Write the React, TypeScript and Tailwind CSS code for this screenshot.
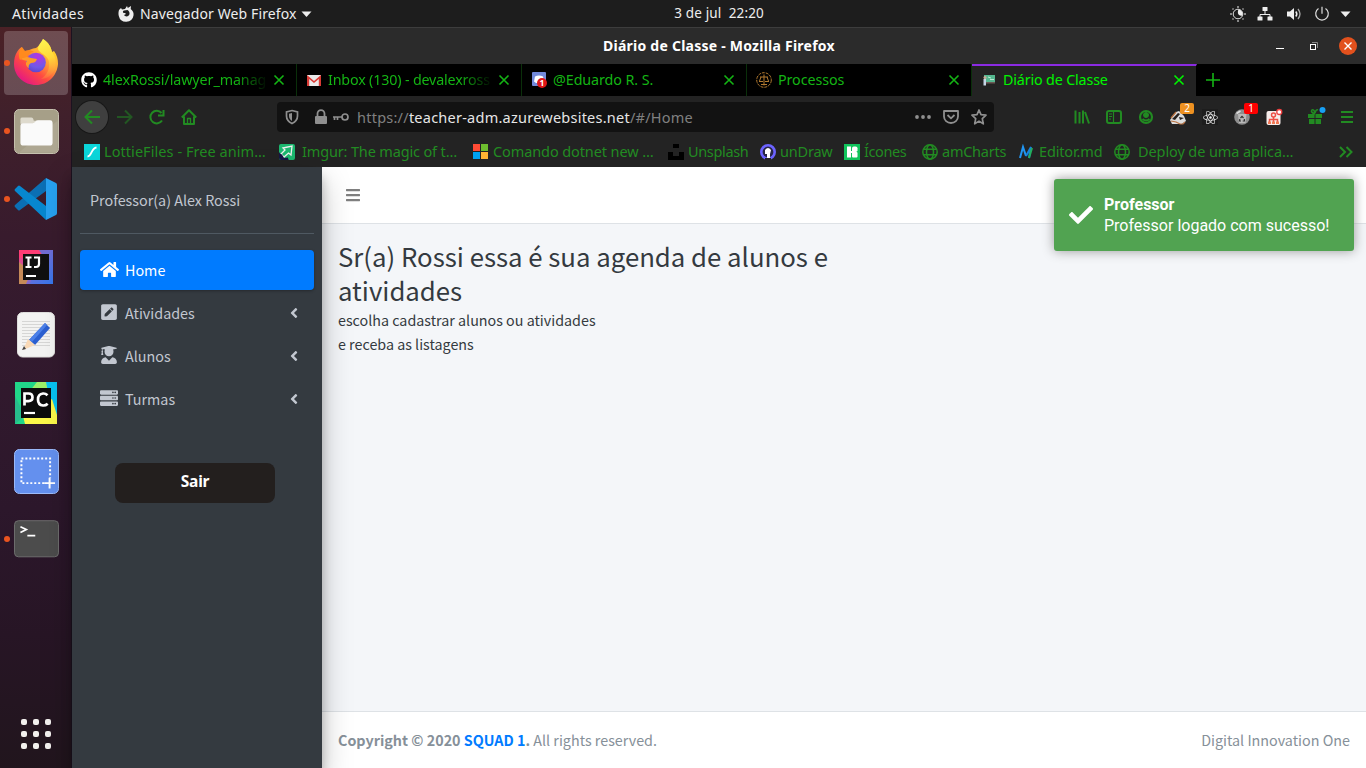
import type { ReactNode } from "react";
import { FaGithub, FaHome, FaPenSquare, FaUserGraduate, FaServer, FaAngleLeft, FaBars, FaCheck, FaReact } from "react-icons/fa";

const ubuntu = "font-['Noto_Sans','Open_Sans',sans-serif]";
const source = "font-['Noto_Sans_CJK_SC',sans-serif]";

function Firefox() {
  return (
    <svg className="-mt-0.5" width="46" height="46" viewBox="0 0 46 46">
      <defs>
        <linearGradient id="ffBody" x1="0.85" y1="0.1" x2="0.2" y2="0.95">
          <stop offset="0" stopColor="#ffe226" />
          <stop offset="0.35" stopColor="#ffa436" />
          <stop offset="0.65" stopColor="#ff4a41" />
          <stop offset="1" stopColor="#e31587" />
        </linearGradient>
        <linearGradient id="ffTail" x1="0.4" y1="0" x2="0.6" y2="1">
          <stop offset="0" stopColor="#fff44f" />
          <stop offset="0.5" stopColor="#ffd83a" />
          <stop offset="1" stopColor="#ff9640" stopOpacity="0.2" />
        </linearGradient>
        <radialGradient id="ffGlobe" cx="0.6" cy="0.2" r="0.9">
          <stop offset="0" stopColor="#b833e1" />
          <stop offset="0.6" stopColor="#7059e8" />
          <stop offset="1" stopColor="#5b3fc4" />
        </radialGradient>
      </defs>
      <path d="M4 13c2-3 3-4 5-5 0 3 1 4 3 4 4 0 7-3 11-3 3-2 6-5 7-9 6 4 8 8 9 13l2-1c3 4 4 8 4 13-1 12-10 21-22 21S1 37 1 25c0-5 1-9 3-12z" fill="url(#ffBody)" />
      <path d="M30 0c6 4 8 8 9 13 4 5 5 12 2 19-3 5-8 8-13 8 6-4 9-10 8-17-1-6-7-8-10-11-3-4 2-8 4-12z" fill="url(#ffTail)" />
      <circle cx="23" cy="23.500" r="9.800" fill="url(#ffGlobe)" />
      <path d="M7 20c3-2 7-3 11-1l6 1c-1 3-3 4-6 4-2 1-3 3-2 5-3-1-4-5-2-7-2-1-5-1-7-2z" fill="#ff9a28" />
      <path d="M9 8l3 4c3-1 6-1 9 1-3 0-6 2-7 5-3 0-5 1-7 3-2-5-1-10 2-13z" fill="#ff8a1d" />
    </svg>
  );
}

function Files() {
  return (
    <svg width="45" height="45" viewBox="0 0 45.500 45.500">
      <rect x="0.5" y="0.5" width="44.500" height="44.500" rx="5" fill="#a69f88" stroke="#c7c2b0" />
      <path d="M44 12v28q0 4-4 4H5z" fill="#b5af9c" opacity="0.5" />
      <path d="M6.500 15v-5q0-1.500 2-1.500h9q2 0 2.500 3.500h16q2.500 0 2.500 3" fill="#dedacd" />
      <path d="M6.500 17q0-2.500 2.500-2.500h10q1.500 0 2.500-1.500 1-1.500 3-1.500h12q2.500 0 2.500 2.500v20q0 3-3 3H9.500q-3 0-3-3z" fill="#fafafa" />
    </svg>
  );
}

function VsCode() {
  return (
    <svg width="44" height="44" viewBox="0 0 44 44">
      <path d="M1 28q-1 1 0 2l3 3q1 1 2 0L32 14V1z" fill="#0b6fb4" />
      <path d="M1 14q-1-1 0-2l3-3q1-1 2 0l26 20v14z" fill="#0787cf" />
      <path d="M32 1l10 5q1 .5 1 2v28q0 1.500-1 2l-10 5z" fill="#27a1f0" />
    </svg>
  );
}

function IntelliJ() {
  return (
    <svg width="36" height="36" viewBox="0 0 36 36">
      <defs>
        <linearGradient id="ijBg" x1="0" y1="0" x2="1" y2="1">
          <stop offset="0" stopColor="#fc3a70" />
          <stop offset="0.5" stopColor="#a863c0" />
          <stop offset="1" stopColor="#087cfa" />
        </linearGradient>
      </defs>
      <path d="M1 1h34v34H1z" fill="url(#ijBg)" />
      <path d="M1 13l12 10-5 12H1z" fill="#c58a58" />
      <path d="M21 1h14v34H12z" fill="#4b74e5" opacity="0.65" />
      <path d="M1 1h20l5 8H1z" fill="#fe3d75" />
      <rect x="5" y="5" width="26" height="26" fill="#101010" />
      <path d="M7.500 8.500h6M10.500 8v10.500M7.500 18h6M16 8.500h5v6.500q0 3-3 3h-2" stroke="#fff" strokeWidth="2.200" fill="none" />
      <path d="M8 27h10" stroke="#fff" strokeWidth="2" />
    </svg>
  );
}

function Editor() {
  return (
    <svg width="38" height="46" viewBox="0 0 38 46">
      <rect x="0.5" y="0.5" width="37" height="44.500" rx="5" fill="#f3f3f2" stroke="#dededc" />
      <path d="M5 9.500h28M5 12.500h28M5 15.500h28M5 18.500h28M5 21.500h28M5 24.500h28M5 27.500h28M5 30.500h28M5 33.500h28" stroke="#d6d6d5" />
      <path d="M28 11l5 5-15 17-6-5z" fill="#2b5fd0" />
      <path d="M28 11l2 2-15 17-3-2z" fill="#4c80e8" />
      <path d="M11 27l7 6-12 5z" fill="#f9d9b6" />
      <path d="M5 38l2-4 2 3z" fill="#444" />
    </svg>
  );
}

function PyCharm() {
  return (
    <svg width="42" height="42" viewBox="0 0 42 42">
      <path d="M0 0h42v42H0z" fill="#21d789" />
      <path d="M29 0h13v33L31 22z" fill="#07c3f2" />
      <path d="M22 0h9l2 10H14z" fill="#9df06a" />
      <path d="M8 34L37 17l5 16v9H10z" fill="#fcf84a" />
      <path d="M0 14l10 20-10 8z" fill="#27bd8c" />
      <rect x="6" y="6" width="30" height="30" fill="#0c0c0c" />
      <path d="M9.500 23.500V11.500h4q4 0 4 3.800t-4 3.800h-4" stroke="#fff" strokeWidth="2.700" fill="none" />
      <path d="M32.500 13.300q-2-2-4.500-1.800-5 .5-5 6t5 6q2.500.2 4.700-1.800" stroke="#fff" strokeWidth="2.700" fill="none" />
      <path d="M9 31h11" stroke="#fff" strokeWidth="2.200" />
    </svg>
  );
}

function Screenshot() {
  return (
    <svg width="45" height="45" viewBox="0 0 45.500 45.500">
      <rect x="0.5" y="0.5" width="44.500" height="44.500" rx="5" fill="#6490ee" stroke="#9dbcfb" />
      <rect x="7.500" y="9.500" width="29" height="25" fill="none" stroke="#fff" strokeWidth="2" strokeDasharray="2 2" />
      <path d="M36 29v11M30.500 34.500h11" stroke="#6490ee" strokeWidth="4" />
      <path d="M36 29v11M30.500 34.500h11" stroke="#fff" strokeWidth="2" />
    </svg>
  );
}

function Terminal() {
  return (
    <svg width="45" height="38" viewBox="0 0 45.500 38">
      <rect x="0.5" y="0.5" width="44.500" height="36.500" rx="4" fill="#4c4c4c" stroke="#6e6e6e" />
      <path d="M6.500 6.500l6 3-6 3M13.500 15.500h8" stroke="#fff" strokeWidth="1.700" fill="none" />
    </svg>
  );
}

function DockItem({ children, running = false, active = false }: { children: ReactNode; running?: boolean; active?: boolean }) {
  return (
    <div className="relative flex h-[68px] w-[72px] shrink-0 items-center justify-center">
      {active && <div className="absolute left-1 top-0.5 size-16 rounded bg-white/20" />}
      {running && <div className="absolute left-1 top-[31px] size-1.5 rounded-full bg-[#e95420]" />}
      <div className="relative flex">{children}</div>
    </div>
  );
}

function Globe() {
  return (
    <svg width="16" height="16" viewBox="0 0 16 16" fill="none" stroke="currentColor" strokeWidth="1.500">
      <circle cx="8" cy="8" r="7.200" />
      <ellipse cx="8" cy="8" rx="3.500" ry="7.200" />
      <path d="M1.500 5.300h13M1.500 10.700h13" />
    </svg>
  );
}

function Close() {
  return (
    <svg className="shrink-0" width="12" height="12" viewBox="0 0 12 12" fill="none" stroke="currentColor" strokeWidth="1.600">
      <path d="M1.500 1.500l9 9M10.500 1.500l-9 9" />
    </svg>
  );
}

function Tab({ icon, label, labelClass = "", active = false }: { icon: ReactNode; label: string; labelClass?: string; active?: boolean }) {
  return (
    <div className={`flex h-8 w-[225px] shrink-0 items-center border-r pl-[9px] pr-[11px] ${active ? "border-black border-t-2 border-t-[#8b2be2] bg-[#232323] pb-0.5 text-[#00f500]" : "border-[#0a2f0a] bg-black text-[#14b414]"}`}>
      <span className="flex size-4 shrink-0">{icon}</span>
      <span className={`ml-1.5 w-[165px] shrink-0 overflow-hidden whitespace-nowrap text-[14.300px] leading-6 tracking-[-0.08px] ${labelClass}`}>{label}</span>
      <span className="ml-[5px]"><Close /></span>
    </div>
  );
}

function Mark({ icon, label, className }: { icon: ReactNode; label: string; className: string }) {
  return (
    <div className={`flex shrink-0 items-center gap-1 whitespace-nowrap ${className}`}>
      <span className="flex size-4 shrink-0">{icon}</span>
      <span>{label}</span>
    </div>
  );
}

function Tool({ children, className = "w-8" }: { children: ReactNode; className?: string }) {
  return <div className={`flex h-8 shrink-0 items-center justify-center ${className}`}>{children}</div>;
}

function NavItem({ icon, label, active = false }: { icon: ReactNode; label: string; active?: boolean }) {
  return (
    <a className={`flex h-10 items-center rounded pl-[19px] pr-4 ${active ? "bg-[#007bff] text-white shadow-[0_1px_3px_rgba(0,0,0,0.3)]" : "text-[#c2c7d0]"}`}>
      <span className="-mt-0.5 flex w-5 justify-center">{icon}</span>
      <span className="ml-1.5 grow text-[14.330px]">{label}</span>
      {!active && <FaAngleLeft size={16} className="-mt-px mr-[-4px]" />}
    </a>
  );
}

function TopBar() {
  return (
    <header className={`grid h-[27px] shrink-0 grid-cols-3 items-center bg-[#1d1d1d] text-[14px] text-[#eee] ${ubuntu}`}>
      <div className="flex items-center whitespace-nowrap pl-3">
        <span className="tracking-[0.4px]">Atividades</span>
        <svg className="ml-[34px]" width="16" height="16" viewBox="0 0 16 16">
          <path d="M1 4l2-2 1 1.500L7 3l2-3 .8 2L13 0l-.3 3C15 5 16 7 15.500 9.500A7.500 7.500 0 0 1 .8 10C.3 8 .4 6 1 4z" fill="#eee" />
          <path d="M6 4.500c-2 1-1 3 1 2.500l1 1-2 1c1 2 5 2 5.500-1 .2-2-.5-3-2-4z" fill="#1d1d1d" />
        </svg>
        <span className="ml-1.5 tracking-[0.12px]">Navegador Web Firefox</span>
        <svg className="ml-1" width="11" height="6" viewBox="0 0 11 6"><path d="M.5.500h10L5.500 6z" fill="#eee" /></svg>
      </div>
      <div className="whitespace-pre pl-[219px] text-[13.500px] tracking-[0.14px]">3 de jul  22:20</div>
      <div className="flex items-center justify-end pr-[15px] text-[#eee]">
        <svg width="16" height="16" viewBox="0 0 16 16" fill="none">
          <circle cx="8" cy="8" r="4.800" stroke="#ddd" />
          <path d="M8.500 3.500a4.500 4.500 0 0 1 3.800 6C9.500 10.500 6.500 8 8.500 3.500z" fill="#eee" />
          <path d="M8 0v2M8 14v2M0 8h2M14 8h2M2.500 2.500l1 1M12.500 12.500l1 1M13.500 2.500l-1 1M3.500 12.500l-1 1" stroke="#aaa" strokeWidth="1.500" />
        </svg>
        <svg className="ml-[11px]" width="16" height="16" viewBox="0 0 16 16" fill="#eee">
          <rect x="5.500" y="1" width="5" height="4" rx=".5" /><rect x=".5" y="10.500" width="5" height="4" rx=".5" /><rect x="10.500" y="10.500" width="5" height="4" rx=".5" />
          <path d="M8 5v3.500M3 11V8.500h10V11" fill="none" stroke="#eee" />
        </svg>
        <svg className="ml-[13px]" width="16" height="16" viewBox="0 0 16 16">
          <path d="M1 5.500h3L8 2v12l-4-3.500H1z" fill="#eee" />
          <path d="M9.800 5.500q2 2.500 0 5" stroke="#eee" strokeWidth="1.500" fill="none" /><path d="M12 3q4 5 0 10" stroke="#aaa" strokeWidth="1.300" fill="none" />
        </svg>
        <svg className="ml-3" width="16" height="16" viewBox="0 0 16 16" fill="none" stroke="#ddd" strokeWidth="1.200">
          <path d="M4.500 2.500a6.300 6.300 0 1 0 7 0M8 .8v7" />
        </svg>
        <svg className="ml-2.5" width="11" height="6" viewBox="0 0 11 6"><path d="M.5.500h10L5.500 6z" fill="#eee" /></svg>
      </div>
    </header>
  );
}

function Dock() {
  return (
    <aside className="flex w-[72px] shrink-0 flex-col border-r border-[#1c1220] bg-[linear-gradient(180deg,#4b2126_0%,#40202b_12%,#381b2d_28%,#331a2e_42%,#2c172b_65%,#271525_82%,#21151d_100%)] pt-[2px]">
      <DockItem running active><Firefox /></DockItem>
      <DockItem running><Files /></DockItem>
      <DockItem running><VsCode /></DockItem>
      <DockItem><IntelliJ /></DockItem>
      <DockItem><Editor /></DockItem>
      <DockItem><PyCharm /></DockItem>
      <DockItem><Screenshot /></DockItem>
      <DockItem running><Terminal /></DockItem>
      <div className="mb-[19px] ml-[21px] mt-auto grid w-[30px] grid-cols-3 gap-1.5">
        {Array.from({ length: 9 }, (_, i) => <span key={i} className="size-1.5 rounded-[2px] bg-[#f2f0ee]" />)}
      </div>
    </aside>
  );
}

function Chrome() {
  return (
    <div className={`shrink-0 ${ubuntu}`}>
      <div className="flex h-[37px] items-center border-t border-[#3d3d3d] bg-[#2b2b2b] pr-[9px]">
        <span className="-mt-0.5 ml-[531px] whitespace-nowrap text-[14px] font-bold tracking-[0.24px] text-white">Diário de Classe - Mozilla Firefox</span>
        <div className="-mt-px ml-auto flex items-center">
          <svg width="8" height="10" viewBox="0 0 8 10"><path d="M0 7.500h8" stroke="#fff" /></svg>
          <svg className="ml-[26px]" width="8" height="8" viewBox="0 0 8 8" fill="none"><path d="M2 .5h5.500V6" stroke="#888" /><rect x=".5" y="2.500" width="5" height="5" stroke="#fff" /></svg>
          <span className="ml-[21px] flex size-[18px] items-center justify-center rounded-full bg-[#e2511d] text-white">
            <svg width="8" height="8" viewBox="0 0 8 8"><path d="M.5.500l7 7M7.500.500l-7 7" stroke="#fff" strokeWidth="1.400" /></svg>
          </span>
        </div>
      </div>

      <div className="flex h-8 bg-black">
        <Tab icon={<FaGithub size={16} color="#fff" />} label="4lexRossi/lawyer_manag" labelClass="[mask-image:linear-gradient(90deg,#000_80%,transparent)]" />
        <Tab
          icon={<svg width="16" height="16" viewBox="0 0 16 16"><path d="M1 3h14v11H1z" fill="#e8e8e8" /><path d="M1 14V3l7 6 7-6v11h-2.200V7L8 11 3.200 7v7z" fill="#d93a35" /></svg>}
          label="Inbox (130) - devalexross" labelClass="[mask-image:linear-gradient(90deg,#000_80%,transparent)] !tracking-[-0.17px]"
        />
        <Tab
          icon={
            <svg width="16" height="16" viewBox="0 0 16 16">
              <rect x="1" width="14" height="14" rx="1" fill="#7289da" /><path d="M4 4.500q4-2 8 0l1 5-2 1.500H5L3 9.500z" fill="#fff" />
              <circle cx="11" cy="11" r="5" fill="#e01717" /><text x="11" y="14" textAnchor="middle" fontSize="8.500" fontWeight="700" fill="#fff">1</text>
            </svg>
          }
          label="@Eduardo R. S."
        />
        <Tab
          icon={<svg width="16" height="16" viewBox="0 0 16 16" fill="none" stroke="#b27a30"><circle cx="8" cy="8" r="7.300" strokeDasharray="3 1" /><path d="M8 2.500v11M4 5h8M3 9.500h4M9 9.500h4M5 5L3.500 9M11 5l1.500 4M5 12.500h6" /></svg>}
          label="Processos"
        />
        <Tab
          active
          icon={<svg width="16" height="16" viewBox="0 0 16 16"><rect x="3" y="3" width="11" height="7.500" fill="#56b890" /><path d="M7 5l3 1M9 7.500h4" stroke="#b8ead4" /><rect x="3" y="10" width="11" height="1.500" fill="#6d5a55" /><circle cx="4" cy="5.500" r="1.500" fill="#c9ad99" /><path d="M2.500 7H5v6.500H2.500z" fill="#c6d6e6" /></svg>}
          label="Diário de Classe"
          labelClass="!tracking-[-0.15px]"
        />
        <div className="ml-[9px] flex items-center text-[#14b414]">
          <svg width="14" height="14" viewBox="0 0 14 14"><path d="M7 0v14M0 7h14" stroke="currentColor" strokeWidth="1.600" /></svg>
        </div>
      </div>

      <div className="flex h-[42px] items-center bg-[#232323] pl-1 pr-[3px] text-[#228b22]">
        <Tool className="w-8 rounded-full bg-[#3f3f3f] ring-1 ring-[#181818]">
          <svg width="16" height="16" viewBox="0 0 16 16" fill="none" stroke="currentColor" strokeWidth="2"><path d="M16 8H1.500M8 1.500L1.500 8 8 14.500" /></svg>
        </Tool>
        <Tool className="ml-px w-8 opacity-50">
          <svg width="16" height="16" viewBox="0 0 16 16" fill="none" stroke="currentColor" strokeWidth="2"><path d="M0 8h14.500M8 1.500L14.500 8 8 14.500" /></svg>
        </Tool>
        <Tool>
          <svg width="16" height="16" viewBox="0 0 16 16" fill="none" stroke="currentColor" strokeWidth="2"><path d="M13 11.500A6.300 6.300 0 1 1 12.500 4M14.500 1v5.500H9" /></svg>
        </Tool>
        <Tool>
          <svg width="16" height="16" viewBox="0 0 16 16" fill="none" stroke="currentColor" strokeWidth="2" strokeLinejoin="round"><path d="M.8 8.500L8 1.300l7.200 7.200M3 7.500V15h10V7.500" /><path d="M6.500 15V9.500h3V15" strokeWidth="1.300" /></svg>
        </Tool>
        <div className="ml-[72px] flex h-[30px] w-[717px] shrink-0 items-center rounded bg-[#121212] text-[#8f8f8f]">
          <svg className="ml-2" width="14" height="16" viewBox="0 0 14 16"><path d="M7 1.500l5.500 1.300V7c0 3.500-2 5.800-5.500 7.500C3.500 12.800 1.500 10.500 1.500 7V2.800z" fill="none" stroke="currentColor" strokeWidth="1.700" /><path d="M7 4v8c2-1.200 3-3 3-5V4.700z" fill="currentColor" transform="translate(14 0) scale(-1 1)" /></svg>
          <svg className="ml-4" width="12" height="16" viewBox="0 0 12 16"><rect y="7" width="12" height="8" rx="1" fill="currentColor" /><path d="M2.500 7V4.700a3.500 3.500 0 0 1 7 0V7" fill="none" stroke="currentColor" strokeWidth="1.800" /></svg>
          <svg className="ml-1.5" width="16" height="10" viewBox="0 0 16 10" fill="none" stroke="currentColor" strokeWidth="1.700"><circle cx="12" cy="5" r="3" /><path d="M9 5H0M1.500 5v3M4.500 5v3" /></svg>
          <span className="ml-2 mt-0.5 whitespace-nowrap text-[14.500px] tracking-[0.24px] text-[#808080]">https://<span className="text-[#e6e6e6]">teacher-adm.azurewebsites.net</span>/#/Home</span>
          <svg className="ml-auto" width="16" height="4" viewBox="0 0 16 4" fill="currentColor"><circle cx="2" cy="2" r="1.900" /><circle cx="8" cy="2" r="1.900" /><circle cx="14" cy="2" r="1.900" /></svg>
          <svg className="ml-3" width="16" height="16" viewBox="0 0 16 16" fill="none" stroke="currentColor" strokeWidth="1.800"><path d="M1 2h14v5.500a7 6.500 0 0 1-14 0z" strokeLinejoin="round" /><path d="M4.500 6L8 9.300 11.500 6" /></svg>
          <svg className="ml-3 mr-[7px]" width="16" height="16" viewBox="0 0 16 16" fill="none" stroke="currentColor" strokeWidth="1.700" strokeLinejoin="round"><path d="M8 1l2 4.700 5 .5-3.700 3.400 1 5.200L8 12.100l-4.300 2.700 1-5.200L1 6.200l5-.5z" /></svg>
        </div>
        <div className="ml-auto flex items-center">
          <Tool><svg width="16" height="16" viewBox="0 0 16 16" fill="none" stroke="currentColor" strokeWidth="2"><path d="M1.500 1.500v13M5.500 3v11.500M9 1.500v13M11 3l4 11.500" /></svg></Tool>
          <Tool><svg width="16" height="16" viewBox="0 0 16 16" fill="none" stroke="currentColor"><rect x="1" y="2" width="14" height="12" rx="2" strokeWidth="2" /><path d="M7.500 2v12M3 5h3M3 7.500h3M3 10h2" strokeWidth="1.200" /></svg></Tool>
          <Tool><svg width="16" height="16" viewBox="0 0 16 16" fill="none" stroke="currentColor"><circle cx="8" cy="8" r="6" strokeWidth="2.200" /><circle cx="8" cy="6" r="2.500" fill="currentColor" /><path d="M4.500 10q3.500 3 7 0" strokeWidth="2" /></svg></Tool>
          <Tool className="relative w-8">
            <svg width="16" height="16" viewBox="0 0 16 16"><path d="M0 11L6 3l3-1 5 5 2 5-4 3H2z" fill="#ddd" /><path d="M2 10l6-6 2 1-5 6zM9 8l5 1-4 2z" fill="#26211f" /><path d="M1 12l5 1 4 2h3l2-2M1 9l5-6" stroke="#b97343" strokeWidth="1.200" fill="none" /></svg>
            <span className="absolute left-[18px] top-0.5 flex h-[11px] w-3.5 items-center justify-center rounded-[2px] bg-[#ed9121] text-[10px] text-white">2</span>
          </Tool>
          <Tool><span className="flex size-4 items-center justify-center bg-[#1d1d1d]"><FaReact size={15} color="#eee" /></span></Tool>
          <Tool className="relative w-8">
            <svg width="16" height="16" viewBox="0 0 16 16"><circle cx="8" cy="8" r="7.800" fill="#8e8e8e" /><path d="M4 5h8.500l-1 9H5z" fill="#b9b9b9" /><path d="M6.500 9l1.500-1.700L9.500 9M10.300 10l.2 2H8.700M7 12H5.500l.3-2" fill="none" stroke="#333" strokeWidth="1.200" /><path d="M2.500 4.500l4-2.500" stroke="#ddd" strokeWidth="1.500" /></svg>
            <span className="absolute left-[18px] top-0.5 flex h-[11px] w-3.5 items-center justify-center rounded-[2px] bg-[#fe0000] text-[10px] text-white">1</span>
          </Tool>
          <Tool>
            <svg className="overflow-visible" width="16" height="16" viewBox="0 0 16 16"><rect x=".5" y="2" width="14" height="14" rx="2" fill="#f5ecea" /><g fill="none" stroke="#ee4f45" strokeWidth="1.500"><circle cx="7.500" cy="6" r="2" /><path d="M7.500 8v6M3.500 13v-2.500h8V13" /></g><path d="M2 12.500h3V15H2zM6 12.500h3V15H6zM10 12.500h3V15h-3z" fill="#f07a55" /><circle cx="13.300" cy="3" r="2.500" fill="#fff" stroke="#ef4040" strokeWidth="1.300" /></svg>
          </Tool>
          <Tool className="ml-[9px] w-8">
            <svg className="overflow-visible" width="16" height="16" viewBox="0 0 16 16"><path d="M1 5h14v4H1zM2 10h12v5H2z" fill="currentColor" /><path d="M8 4v11.500M1 9.500h14" stroke="#232323" /><path d="M8 5Q3 3 5 1q2-1 3 3 1-4 3-3" stroke="currentColor" strokeWidth="1.600" fill="none" /><circle cx="15.500" cy="1" r="3" fill="#18a0f5" /></svg>
          </Tool>
          <Tool><svg width="12" height="14" viewBox="0 0 12 14"><path d="M0 2h12M0 7h12M0 12h12" stroke="currentColor" strokeWidth="2" /></svg></Tool>
        </div>
      </div>

      <div className="flex h-[29px] items-center bg-[#232323] pb-0.5 pl-3 text-[14.500px] text-[#228b22]">
        <Mark className="w-[195px] tracking-[0.06px]" label="LottieFiles - Free anim…" icon={<svg width="16" height="16" viewBox="0 0 16 16"><path d="M0 0h16v16H0z" fill="#0bd6da" /><path d="M3.500 12.500C8 12.500 7 4 12.500 3.500" stroke="#fff" strokeWidth="1.800" fill="none" /></svg>} />
        <Mark className="w-[194px] tracking-[-0.15px] [&>span:last-child]:pl-[3px]" label="Imgur: The magic of t…" icon={<svg width="16" height="16" viewBox="0 0 16 16"><rect width="16" height="16" rx="2" fill="#1bb76e" /><path d="M4 4l9-2-1 9-2.500-2L5 13l-3-3 4-4z" fill="#1bb76e" stroke="#eee" strokeWidth="1.300" /><path d="M0 8q1 2 3 2.500L5 14l4-.5q0 2 1 2.500H2q-2 0-2-2z" fill="#171544" /></svg>} />
        <Mark className="w-[195px] tracking-[-0.1px]" label="Comando dotnet new …" icon={<svg width="16" height="16" viewBox="0 0 16 16"><path d="M0 0h7v7H0z" fill="#ff4b35" /><path d="M8 0h7v7H8z" fill="#6ebe2f" /><path d="M0 8h7v7H0z" fill="#00a1f1" /><path d="M8 8h7v7H8z" fill="#ffb433" /></svg>} />
        <Mark className="w-[92px] tracking-[-0.35px]" label="Unsplash" icon={<svg width="16" height="16" viewBox="0 0 16 16"><path d="M5 0h6v4H5zM0 8h5v4h6V8h5v8H0z" fill="#000" /></svg>} />
        <Mark className="w-[84px] tracking-[-0.2px]" label="unDraw" icon={<svg width="16" height="16" viewBox="0 0 16 16"><circle cx="8" cy="8" r="6.700" fill="#282646" stroke="#6c63ff" strokeWidth="2.600" /><path d="M5 6q3-4 6 0l-1 4v4H7v-4H5z" fill="#fff" /><path d="M5 14h6v2H5z" fill="#232323" /></svg>} />
        <Mark className="w-[78px] tracking-[-0.4px]" label="Ícones" icon={<svg width="16" height="16" viewBox="0 0 16 16"><path d="M0 0h16v16H0z" fill="#10c45c" /><path d="M3 2.500h4v11H3zM6 7h4v2H6z" fill="#fff" /><rect x="8" y="2.500" width="5.500" height="5.500" rx="1.800" fill="#fff" /><rect x="8" y="8" width="5.500" height="5.500" rx="1" fill="#fff" /></svg>} />
        <Mark className="w-[97px] tracking-[-0.25px]" label="amCharts" icon={<Globe />} />
        <Mark className="w-[95px] tracking-[-0.15px]" label="Editor.md" icon={<svg width="16" height="16" viewBox="0 0 16 16" fill="none" strokeWidth="2"><path d="M1 14L4 3l3 9" stroke="#2196f3" /><path d="M7 12l5-9-2 11" stroke="#1583dd" /><path d="M10 14l3-10" stroke="#22b05d" /></svg>} />
        <Mark className="w-[225px] tracking-[-0.1px] [&>span:last-child]:pl-1" label="Deploy de uma aplica…" icon={<Globe />} />
        <svg width="14" height="12" viewBox="0 0 14 12" fill="none" stroke="currentColor" strokeWidth="2"><path d="M1 1l5 5-5 5M7.500 1l5 5-5 5" /></svg>
      </div>
    </div>
  );
}

function Page() {
  return (
    <div className={`relative flex min-h-0 grow ${source}`}>
      <nav className="z-10 flex w-[250px] shrink-0 flex-col bg-[#343a40] px-2 shadow-[0_14px_28px_rgba(0,0,0,0.25),0_10px_10px_rgba(0,0,0,0.22)]">
        <div className="flex h-[67px] items-center border-b border-[#4f5962] pl-2.5 text-[14.330px] text-[#c2c7d0]">Professor(a) Alex Rossi</div>
        <div className="mt-4 flex flex-col gap-[3px]">
          <NavItem active icon={<FaHome size={19} />} label="Home" />
          <NavItem icon={<FaPenSquare size={18} />} label="Atividades" />
          <NavItem icon={<FaUserGraduate size={18} />} label="Alunos" />
          <NavItem icon={<FaServer size={18} />} label="Turmas" />
        </div>
        <button className={`ml-[35px] mt-11 h-10 w-40 rounded-lg bg-[#231f1e] pb-0.5 text-[15.500px] font-bold tracking-[-0.2px] text-white ${ubuntu}`}>Sair</button>
      </nav>
      <div className="flex grow flex-col bg-[#f4f6f9]">
        <div className="flex h-[57px] shrink-0 items-center border-b border-[#dee2e6] bg-white pl-[23px] text-[#7f7f7f]"><FaBars size={16} /></div>
        <main className="grow px-4 pt-[15px] text-[#343a40]">
          <h1 className="w-[510px] text-[25.750px] leading-[34px]">Sr(a) Rossi essa é sua agenda de alunos e atividades</h1>
          <p className="mt-px text-[14.300px] leading-6">escolha cadastrar alunos ou atividades<br />e receba as listagens</p>
        </main>
        <footer className="flex h-[57px] shrink-0 items-center justify-between border-t border-[#dee2e6] bg-white px-4 text-[14.330px] text-[#869099]">
          <span><b>Copyright © 2020 <span className="text-[#007bff]">SQUAD 1</span>.</b> All rights reserved.</span>
          <span>Digital Innovation One</span>
        </footer>
      </div>
      <div className="absolute right-3 top-3 z-20 flex h-[72px] w-[300px] items-center rounded-[3px] bg-[#51a351] pl-[15px] font-['Roboto',sans-serif] text-base leading-[21px] text-white shadow-[0_0_12px_#999]">
        <FaCheck size={24} className="shrink-0" />
        <div className="ml-[11px] whitespace-nowrap"><div className="font-bold">Professor</div><div>Professor logado com sucesso!</div></div>
      </div>
    </div>
  );
}

export default function App() {
  return (
    <div className="flex h-[768px] w-[1366px] flex-col overflow-hidden">
      <TopBar />
      <div className="flex min-h-0 grow">
        <Dock />
        <div className="flex min-w-0 grow flex-col">
          <Chrome />
          <Page />
        </div>
      </div>
    </div>
  );
}
